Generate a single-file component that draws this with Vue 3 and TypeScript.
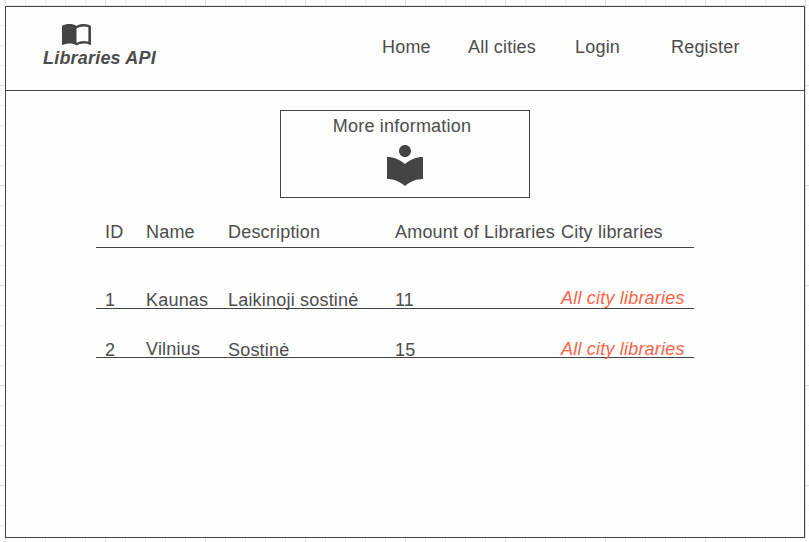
<script setup lang="ts">
interface City {
  id: number
  name: string
  description: string
  libraries: number
}

const links: string[] = ['Home', 'All cities', 'Login', 'Register']
const columns: string[] = ['ID', 'Name', 'Description', 'Amount of Libraries', 'City libraries']
const cities: City[] = [
  { id: 1, name: 'Kaunas', description: 'Laikinoji sostinė', libraries: 11 },
  { id: 2, name: 'Vilnius', description: 'Sostinė', libraries: 15 },
]
</script>

<template>
  <div class="canvas">
    <div class="frame">
      <header class="header">
        <div class="brand">
          <svg class="brand-icon" viewBox="1 4.5 22 17" preserveAspectRatio="none" aria-hidden="true">
            <path d="M21 5c-1.11-.35-2.33-.5-3.5-.5-1.95 0-4.05.4-5.5 1.5-1.45-1.1-3.55-1.5-5.5-1.5S2.45 4.9 1 6v14.65c0 .25.25.5.5.5.1 0 .15-.05.25-.05C3.1 20.45 5.05 20 6.5 20c1.95 0 4.05.4 5.5 1.5 1.35-.85 3.8-1.5 5.5-1.5 1.65 0 3.35.3 4.75 1.05.1.05.15.05.25.05.25 0 .5-.25.5-.5V6c-.6-.45-1.25-.75-2-1zm0 13.5c-1.1-.35-2.3-.5-3.5-.5-1.7 0-4.15.65-5.5 1.5V8c1.35-.85 3.8-1.5 5.5-1.5 1.2 0 2.4.15 3.5.5v11.5z" />
          </svg>
          <span class="brand-name">Libraries API</span>
        </div>
        <nav class="nav">
          <a v-for="link in links" :key="link">{{ link }}</a>
        </nav>
      </header>
      <main class="main">
        <section class="info">
          <span class="info-title">More information</span>
          <svg class="info-icon" viewBox="0 0 24 24" aria-hidden="true">
            <path d="M12 11.55C9.64 9.35 6.48 8 3 8v11c3.48 0 6.64 1.35 9 3.55 2.36-2.19 5.52-3.55 9-3.55V8c-3.48 0-6.64 1.35-9 3.55zM12 8c1.66 0 3-1.34 3-3s-1.34-3-3-3-3 1.34-3 3 1.34 3 3 3z" />
          </svg>
        </section>
        <div class="table">
          <div class="row head">
            <span v-for="column in columns" :key="column">{{ column }}</span>
          </div>
          <div v-for="city in cities" :key="city.id" class="row city">
            <span>{{ city.id }}</span>
            <span class="name">{{ city.name }}</span>
            <span>{{ city.description }}</span>
            <span>{{ city.libraries }}</span>
            <a class="link">All city libraries</a>
          </div>
        </div>
      </main>
    </div>
  </div>
</template>

<style>
body {
  margin: 0;
  overflow: hidden;
}
</style>

<style scoped>
.canvas {
  box-sizing: border-box;
  width: 809px;
  height: 542px;
  padding: 6px 4px 4px 5px;
  background-color: #fff;
  background-image:
    linear-gradient(to right, #dedede 1px, transparent 1px),
    linear-gradient(to bottom, #dedede 1px, transparent 1px),
    linear-gradient(to right, #ececec 1px, transparent 1px),
    linear-gradient(to bottom, #ececec 1px, transparent 1px);
  background-size: 100px 100px, 100px 100px, 20px 20px, 20px 20px;
  background-position: 5px 85px;
  font-family: "Liberation Sans", Arial, sans-serif;
  font-size: 18px;
  line-height: 20px;
  letter-spacing: 0.2px;
  color: #4c4c4c;
}

.frame {
  box-sizing: border-box;
  height: 532px;
  border: 1px solid #444;
  background: #fefefe;
}

.header {
  display: flex;
  justify-content: space-between;
  box-sizing: border-box;
  height: 84px;
  padding: 17px 64px 0 37px;
  border-bottom: 1px solid #444;
}

.brand {
  display: flex;
  flex-direction: column;
  align-items: flex-start;
}

.brand-icon {
  width: 29px;
  height: 21.5px;
  margin-left: 19px;
  margin-bottom: 0.5px;
  fill: #444;
}

.brand-name {
  margin-top: 2px;
  font-weight: bold;
  font-style: italic;
}

.nav {
  display: grid;
  grid-template-columns: 86px 107px 96px 69px;
  padding-top: 13px;
  white-space: nowrap;
}

.main {
  display: flex;
  flex-direction: column;
  padding: 19px 0 0 90px;
}

.info {
  display: flex;
  flex-direction: column;
  align-items: center;
  box-sizing: border-box;
  width: 250px;
  height: 88px;
  margin-left: 184px;
  padding-top: 5px;
  border: 1px solid #444;
}

.info-title {
  margin-right: 6px;
}

.info-icon {
  width: 48px;
  height: 48px;
  margin-top: 5px;
  fill: #444;
}

.table {
  width: 598px;
}

.row {
  display: grid;
  grid-template-columns: 41px 82px 167px 166px 1fr;
  align-items: start;
  box-sizing: border-box;
  padding-left: 9px;
  border-bottom: 1px solid #444;
  white-space: nowrap;
}

.head {
  height: 50px;
  padding-top: 24px;
}

.city {
  height: 61px;
  padding-top: 42px;
}

.link {
  margin-top: -2px;
  font-style: italic;
  color: #ff6347;
}

.city + .city {
  height: 49px;
  padding-top: 31px;
}

.city + .city .name,
.city + .city .link {
  margin-top: -1px;
}
</style>
